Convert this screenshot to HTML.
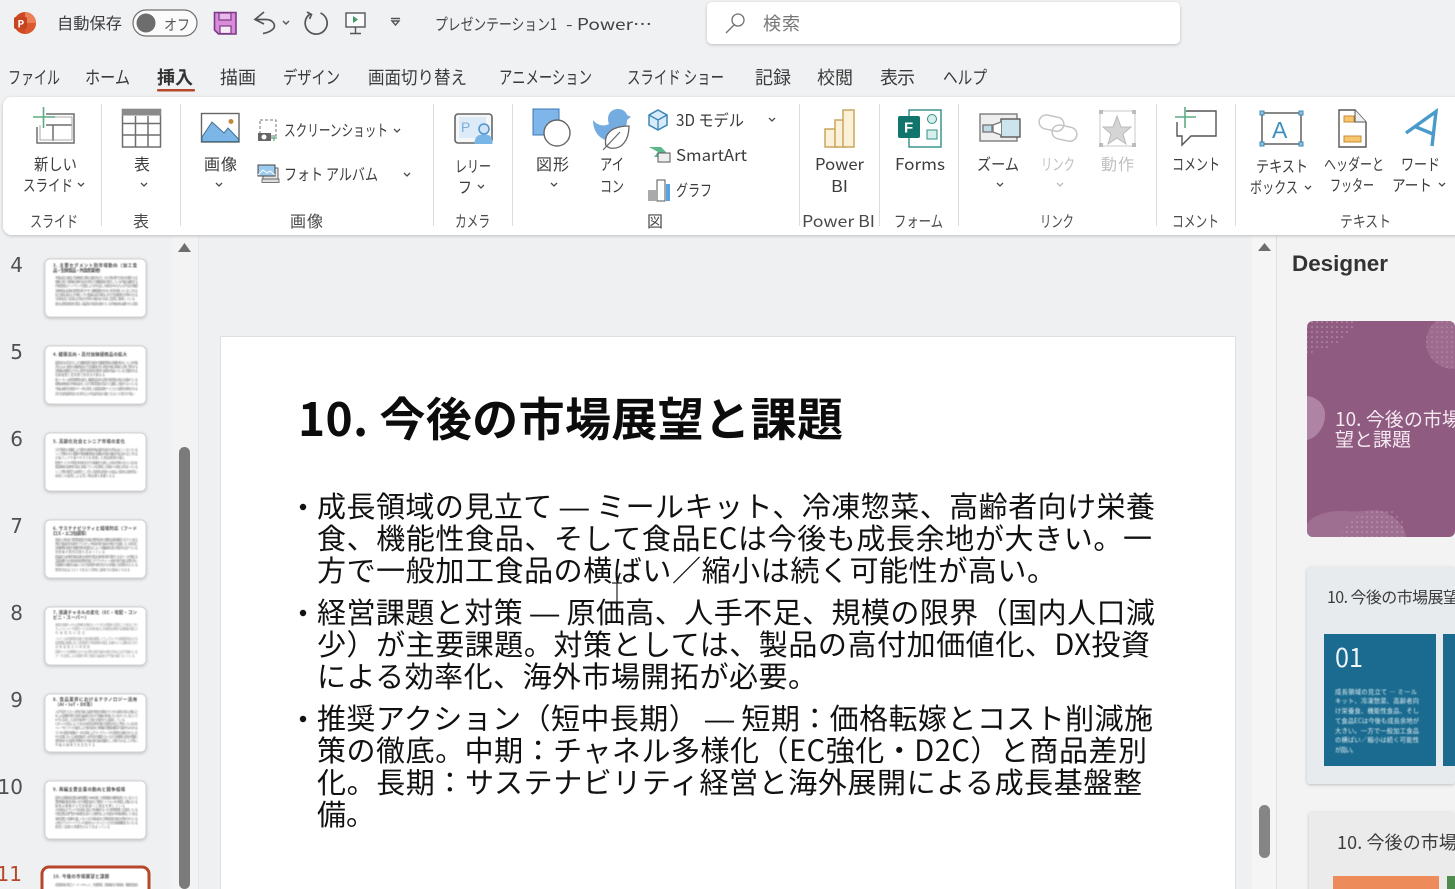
<!DOCTYPE html>
<html lang="ja"><head><meta charset="utf-8"><title>PowerPoint</title>
<style>
html,body{margin:0;padding:0;width:1455px;height:889px;overflow:hidden;background:#f0f1f3}
svg{display:block;position:absolute;left:0;top:0;filter:blur(.25px)}
text{font-family:"Noto Sans CJK JP","Liberation Sans",sans-serif;fill:#3c3c3c}
tspan.d{font-family:"Liberation Sans",sans-serif}
.t{font-size:16px}
.g{font-size:16px;fill:#4a4a4a}
.tab{font-size:18px;fill:#3a3a3a}
.b{font-size:29px;fill:#111}
.n{font-size:20px;fill:#505050;text-anchor:end;font-family:"DejaVu Sans",sans-serif}
.tt{font-size:4.4px;font-weight:700;fill:#444}
.tb{font-size:3.2px;fill:#777}
.s{font-size:6.300px;fill:#e4eff4}
</style></head><body>
<svg width="1455" height="889" viewBox="0 0 1455 889" xmlns="http://www.w3.org/2000/svg">
<defs>
<filter id="sh" x="-5%" y="-20%" width="110%" height="140%"><feDropShadow dx="0" dy="1" stdDeviation="1.500" flood-color="#000" flood-opacity=".22"/></filter>
<filter id="bl" x="-5%" y="-5%" width="110%" height="110%"><feGaussianBlur stdDeviation=".4"/></filter>
<pattern id="dots" width="5" height="5" patternUnits="userSpaceOnUse"><circle cx="2" cy="2" r=".8" fill="#d3b3c8"/></pattern>
<clipPath id="c1"><rect x="1307" y="321" width="148" height="216" rx="6"/></clipPath>
</defs>
<rect width="1455" height="889" fill="#f0f1f3"/>

<!-- title bar -->
<circle cx="25" cy="23" r="11" fill="#cf4a24"/>
<path d="M25 12a11 11 0 0 1 11 11H25z" fill="#ea7f58"/>
<path d="M25 34a11 11 0 0 0 11-11H25z" fill="#d9582f"/>
<rect x="14" y="17" width="13" height="12" rx="2" fill="#c8431f"/>
<text x="17.500" y="27.500" style="font-size:10px;font-weight:700;fill:#fff">P</text>
<text class="t" x="57" y="29" textLength="65" lengthAdjust="spacingAndGlyphs">自動保存</text>
<rect x="133" y="10" width="64" height="26" rx="13" fill="#fbfbfb" stroke="#6f6f6f" stroke-width="1.200"/>
<circle cx="146" cy="23" r="9.500" fill="#6d6d6d"/>
<text x="164" y="30" textLength="26" lengthAdjust="spacingAndGlyphs" style="font-size:15px;fill:#555">オフ</text>
<path d="M214.500 12.500H236V34H218.500L214.500 30z" fill="#d98ad9" stroke="#7c3a86" stroke-width="1.600"/>
<rect x="219" y="13" width="12" height="7" fill="#e9b9e9" stroke="#7c3a86" stroke-width="1.200"/>
<rect x="220" y="26" width="11" height="7.500" fill="#f7eaf7" stroke="#7c3a86" stroke-width="1.200"/>
<path d="M264 12L255 19.500L264 24M255 19.500H266C273 19.500 276 25 273.500 28.500C271.500 31 267 33 263 33.500" fill="none" stroke="#555" stroke-width="1.700"/>
<path d="M283 21l3 3 3-3M392 21h7l-3.500 4zM391 18.500h9" fill="none" stroke="#555" stroke-width="1.400"/>
<path d="M320.500 13A11 11 0 1 1 310 14M307 12l4.500 2.500-2 4.500" fill="none" stroke="#555" stroke-width="1.700"/>
<rect x="346" y="13" width="19" height="14" fill="#fbfbfb" stroke="#555" stroke-width="1.400"/>
<path d="M353 16l5 3.500-5 3.500z" fill="#3f9b6a"/>
<path d="M355.500 27v6M350 33.500h11" stroke="#555" stroke-width="1.400"/>
<text class="t" x="435" y="30" textLength="122" lengthAdjust="spacingAndGlyphs" style="fill:#444">プレゼンテーション1</text>
<text class="t" x="566" y="30" textLength="86" lengthAdjust="spacingAndGlyphs" style="fill:#444">-  Power…</text>
<rect x="707" y="2" width="473" height="42" rx="5" fill="#fff" filter="url(#sh)"/>
<circle cx="738" cy="20" r="6" fill="none" stroke="#707070" stroke-width="1.300"/>
<path d="M734 25l-8 8" stroke="#707070" stroke-width="1.300"/>
<text x="763" y="30" textLength="37" style="font-size:18px;fill:#777">検索</text>

<!-- tabs -->
<text class="tab" x="8" y="84" textLength="52" lengthAdjust="spacingAndGlyphs">ファイル</text>
<text class="tab" x="85" y="84" textLength="45" lengthAdjust="spacingAndGlyphs">ホーム</text>
<text class="tab" x="157" y="84" textLength="36" style="font-weight:700;fill:#333">挿入</text>
<rect x="157" y="89" width="38" height="2.500" rx="1" fill="#b7472a"/>
<text class="tab" x="220" y="84" textLength="36">描画</text>
<text class="tab" x="283" y="84" textLength="57" lengthAdjust="spacingAndGlyphs">デザイン</text>
<text class="tab" x="368" y="84" textLength="99" lengthAdjust="spacingAndGlyphs">画面切り替え</text>
<text class="tab" x="499" y="84" textLength="93" lengthAdjust="spacingAndGlyphs">アニメーション</text>
<text class="tab" x="627" y="84" textLength="97" lengthAdjust="spacingAndGlyphs">スライド ショー</text>
<text class="tab" x="755" y="84" textLength="36">記録</text>
<text class="tab" x="817" y="84" textLength="36">校閲</text>
<text class="tab" x="880" y="84" textLength="35">表示</text>
<text class="tab" x="943" y="84" textLength="44" lengthAdjust="spacingAndGlyphs">ヘルプ</text>

<!-- sidebars / canvas -->
<rect x="0" y="236" width="172" height="653" fill="#eff0f2"/>
<rect x="172" y="236" width="27" height="653" fill="#f3f3f4"/>
<rect x="199" y="236" width="1053" height="653" fill="#eef0f2"/>
<rect x="1252" y="236" width="25" height="653" fill="#f5f5f6"/>
<rect x="1277" y="236" width="178" height="653" fill="#f3f3f4"/>
<rect x="1276" y="236" width="1" height="653" fill="#dfdfdf"/>
<rect x="198" y="236" width="1" height="653" fill="#e6e6e6"/>
<path d="M178 252l6.500-9 6.500 9z" fill="#6e6e6e"/>
<rect x="179" y="447" width="11" height="442" rx="5.500" fill="#7b7b7b"/>
<path d="M1258 251l6.500-8 6.500 8z" fill="#6e6e6e"/>
<rect x="1259" y="805" width="11" height="53" rx="5.500" fill="#858585"/>

<!-- ribbon -->
<rect x="3" y="97" width="1470" height="138" rx="9" fill="#fff" filter="url(#sh)"/>
<g fill="#dcdcdc">
<rect x="101" y="104" width="1" height="122"/><rect x="180" y="104" width="1" height="122"/>
<rect x="433" y="104" width="1" height="122"/><rect x="512" y="104" width="1" height="122"/>
<rect x="799" y="104" width="1" height="122"/><rect x="879" y="104" width="1" height="122"/>
<rect x="958" y="104" width="1" height="122"/><rect x="1156" y="104" width="1" height="122"/>
<rect x="1235" y="104" width="1" height="122"/>
</g>

<!-- ribbon icons -->
<g fill="none" stroke="#6f6f6f" stroke-width="1.500">
<path d="M46 114H74V143H37V127"/><path d="M53 125V141M46 125H72"/>
<path d="M40 125V140H72V117H50" stroke="#aaa" stroke-width="1"/>
<rect x="122.500" y="109.500" width="38" height="37.500"/><path d="M122.500 123.500H160.500M122.500 135H160.500M135.500 116V147M148 116V147"/>
</g>
<path d="M43.500 107V128M33 117H55" stroke="#5cab82" stroke-width="1.600" fill="none"/>
<rect x="122" y="109" width="39" height="6.500" fill="#8a8a8a"/>
<rect x="201.500" y="113.500" width="37.500" height="28.500" fill="#fff" stroke="#666" stroke-width="1.400"/>
<path d="M202 141V137L212 122L224 133L228 128L238.500 139V141.500H202z" fill="#7cb6e6" stroke="#44708f"/>
<circle cx="231" cy="121.500" r="2.500" fill="#c4883a"/>
<rect x="260" y="120" width="16" height="16" fill="none" stroke="#777" stroke-dasharray="3 2"/>
<rect x="258" y="133" width="13" height="8" fill="#666"/><circle cx="264" cy="137" r="2.500" fill="#fff"/>
<path d="M274 135v6M271 138h6" stroke="#5cab82" stroke-width="1.200"/>
<path d="M262 179h17v3.500h-17z" fill="#ddd" stroke="#777"/><rect x="263" y="168" width="15" height="11" fill="#e5e5e5" stroke="#666"/>
<path d="M258 165h17v11h-17z" fill="#9ccbf0" stroke="#444"/><path d="M258 175l5-5 4 3 3-2 5 4" fill="none" stroke="#fff"/>
<rect x="455" y="114" width="37" height="29" rx="3" fill="#f6f6f6" stroke="#666" stroke-width="1.600"/>
<rect x="459" y="117" width="27" height="21" fill="#dcebf7"/>
<text x="461" y="132" style="font-size:14px;fill:#79b0dd;font-family:'Liberation Sans',sans-serif">P</text>
<circle cx="484" cy="129" r="5" fill="#cfe5f7" stroke="#4d93cc" stroke-width="1.500"/>
<path d="M474.500 144c0-8 4-9.500 9.500-9.500s8.500 1.500 8.500 9.500z" fill="#79b6e8"/>

<rect x="533" y="109" width="26" height="26" fill="#7fb6ea" stroke="#3a78b5"/>
<circle cx="557" cy="133" r="13" fill="#fff" stroke="#666" stroke-width="1.400"/>
<path d="M593 120C597 125 603 127 609 124C606 116 610 109 618 109C623 109 626 112 627 115L631 117L627 120C627 130 620 141 610 141C600 140 593 132 593 120z" fill="#74abe0"/>
<path d="M606 146C603 133 613 126 629 126C629 140 622 150 610 148z" fill="#fff" stroke="#666" stroke-width="1.300"/>
<path d="M603 150L620 132" stroke="#666" stroke-width="1.200"/>
<path d="M658 110l9 5v10l-9 5-9-5v-10z" fill="#d8ebfa" stroke="#3a85b8" stroke-width="1.500"/><path d="M649 115l9 5 9-5M658 120v10" fill="none" stroke="#3a85b8" stroke-width="1.300"/>
<path d="M649 147h12l5 5-5 5h-7l4-5z" fill="#5cb88b"/><rect x="658" y="153" width="12" height="9" fill="#eee" stroke="#555"/>
<rect x="648" y="190" width="8" height="11" fill="#aaa"/><rect x="657" y="180" width="8" height="21" fill="#fff" stroke="#555"/><rect x="666" y="184" width="4" height="17" fill="#57a2e0"/>

<g fill="#fbf1d8" stroke="#c9a55e" stroke-width="1.500">
<rect x="825" y="129" width="13" height="18"/><rect x="835" y="120" width="10" height="27"/><rect x="843" y="110" width="11" height="37"/>
</g>
<rect x="909" y="110" width="32" height="37" fill="#fff" stroke="#2f8f84" stroke-width="1.400"/>
<circle cx="932" cy="119" r="4.500" fill="#d6efec" stroke="#2f8f84"/><rect x="927" y="130" width="10" height="9" fill="#d6efec" stroke="#2f8f84"/>
<rect x="898" y="116" width="22" height="22" rx="2" fill="#11756d"/>
<text x="904" y="132.500" style="font-size:15px;font-weight:700;fill:#fff;font-family:'Liberation Sans',sans-serif">F</text>

<g fill="none" stroke="#7a7a7a" stroke-width="1.400">
<rect x="980" y="114" width="37" height="27" fill="#eee"/><rect x="1001" y="119" width="19" height="18" fill="#cde4ec" stroke="#5a5a5a"/><path d="M1001 122l-8 3v7l8 3" fill="#fff"/><rect x="983" y="125" width="9" height="7" fill="#bcdce8"/>
</g>
<g fill="none" stroke="#c4c4c4" stroke-width="1.500"><rect x="1039" y="116" width="25" height="14" rx="7" transform="rotate(12 1051 123)"/><rect x="1052" y="126" width="25" height="14" rx="7" transform="rotate(12 1064 133)"/></g>
<rect x="1100" y="111" width="35" height="35" fill="none" stroke="#c8c8c8"/>
<path d="M1117 116l4 11h10l-8 7 3 10-9-6-9 6 3-10-8-7h10z" fill="#d5d5d5" stroke="#bbb"/>
<g fill="#bcbcbc"><rect x="1099" y="110" width="4" height="4"/><rect x="1132" y="110" width="4" height="4"/><rect x="1099" y="143" width="4" height="4"/><rect x="1132" y="143" width="4" height="4"/></g>
<path d="M1186 111H1216V136H1191L1182 145V136H1177V122" fill="#fff" stroke="#555" stroke-width="1.400"/>
<path d="M1185 107V128M1175 117H1196" stroke="#5cab82" stroke-width="1.600"/>
<rect x="1262" y="113" width="39" height="31" fill="#fff" stroke="#555" stroke-width="1.400"/>
<g fill="#8cc3e4" stroke="#3e88b5"><rect x="1260" y="111" width="4" height="4"/><rect x="1299" y="111" width="4" height="4"/><rect x="1260" y="142" width="4" height="4"/><rect x="1299" y="142" width="4" height="4"/></g>
<text x="1272" y="138" style="font-size:23px;fill:#3f8fbf;font-family:'Liberation Sans',sans-serif">A</text>
<path d="M1339 110H1355L1366 122V147H1339z" fill="#fff" stroke="#555" stroke-width="1.400"/>
<path d="M1355 110V122H1366" fill="#eee" stroke="#555"/>
<rect x="1344" y="116" width="10" height="6" fill="#f7c56d" stroke="#c98c35"/><rect x="1344" y="136" width="17" height="6" fill="#f7c56d" stroke="#c98c35"/>
<path d="M1406 133L1436 111.500L1432 146M1416 127L1433 134" fill="none" stroke="#4a9bcb" stroke-width="3.400"/>

<!-- chevrons -->
<g fill="none" stroke="#4a4a4a" stroke-width="1.300">
<path d="M78 183l3 3 3-3M141 183l3 3 3-3M216 183l3 3 3-3M394 129l3 3 3-3M404 173l3 3 3-3M478 185l3 3 3-3M551 183l3 3 3-3M769 118l3 3 3-3M997 183l3 3 3-3M1305 186l3 3 3-3M1439 183l3 3 3-3"/>
<path d="M1057 183l3 3 3-3" stroke="#bbb"/>
</g>

<!-- ribbon labels -->
<text class="t" x="34" y="170" textLength="43" lengthAdjust="spacingAndGlyphs">新しい</text>
<text class="t" x="23" y="191" textLength="50" lengthAdjust="spacingAndGlyphs">スライド</text>
<text class="t" x="134" y="170" textLength="16">表</text>
<text class="t" x="204" y="170" textLength="33">画像</text>
<text class="t" x="284" y="136" textLength="104" lengthAdjust="spacingAndGlyphs">スクリーンショット</text>
<text class="t" x="284" y="180" textLength="94" lengthAdjust="spacingAndGlyphs">フォト アルバム</text>
<text class="t" x="455" y="172" textLength="36" lengthAdjust="spacingAndGlyphs">レリー</text>
<text class="t" x="458" y="193" textLength="14" lengthAdjust="spacingAndGlyphs">フ</text>
<text class="t" x="536" y="170" textLength="33">図形</text>
<text class="t" x="600" y="170" textLength="24" lengthAdjust="spacingAndGlyphs">アイ</text>
<text class="t" x="600" y="192" textLength="24" lengthAdjust="spacingAndGlyphs">コン</text>
<text class="t" x="676" y="126" textLength="68" lengthAdjust="spacingAndGlyphs">3D モデル</text>
<text class="t" x="676" y="161" textLength="71" lengthAdjust="spacingAndGlyphs">SmartArt</text>
<text class="t" x="676" y="196" textLength="36" lengthAdjust="spacingAndGlyphs">グラフ</text>
<text class="t" x="815" y="170" textLength="49" lengthAdjust="spacingAndGlyphs">Power</text>
<text class="t" x="831" y="192" textLength="17" lengthAdjust="spacingAndGlyphs">BI</text>
<text class="t" x="895" y="170" textLength="50" lengthAdjust="spacingAndGlyphs">Forms</text>
<text class="t" x="977" y="170" textLength="42" lengthAdjust="spacingAndGlyphs">ズーム</text>
<text class="t" x="1041" y="170" textLength="34" lengthAdjust="spacingAndGlyphs" style="fill:#c0c0c0">リンク</text>
<text class="t" x="1101" y="170" textLength="33" style="fill:#c0c0c0">動作</text>
<text class="t" x="1172" y="170" textLength="48" lengthAdjust="spacingAndGlyphs">コメント</text>
<text class="t" x="1256" y="172" textLength="52" lengthAdjust="spacingAndGlyphs">テキスト</text>
<text class="t" x="1250" y="193" textLength="48" lengthAdjust="spacingAndGlyphs">ボックス</text>
<text class="t" x="1324" y="170" textLength="60" lengthAdjust="spacingAndGlyphs">ヘッダーと</text>
<text class="t" x="1330" y="191" textLength="44" lengthAdjust="spacingAndGlyphs">フッター</text>
<text class="t" x="1401" y="170" textLength="39" lengthAdjust="spacingAndGlyphs">ワード</text>
<text class="t" x="1392" y="191" textLength="40" lengthAdjust="spacingAndGlyphs">アート</text>

<text class="g" x="30" y="227" textLength="48" lengthAdjust="spacingAndGlyphs">スライド</text>
<text class="g" x="133" y="227" textLength="16">表</text>
<text class="g" x="290" y="227" textLength="33">画像</text>
<text class="g" x="455" y="227" textLength="35" lengthAdjust="spacingAndGlyphs">カメラ</text>
<text class="g" x="647" y="227" textLength="16">図</text>
<text class="g" x="802" y="227" textLength="73" lengthAdjust="spacingAndGlyphs">Power BI</text>
<text class="g" x="894" y="227" textLength="49" lengthAdjust="spacingAndGlyphs">フォーム</text>
<text class="g" x="1040" y="227" textLength="34" lengthAdjust="spacingAndGlyphs">リンク</text>
<text class="g" x="1172" y="227" textLength="47" lengthAdjust="spacingAndGlyphs">コメント</text>
<text class="g" x="1340" y="227" textLength="51" lengthAdjust="spacingAndGlyphs">テキスト</text>

<!-- slide numbers -->
<text class="n" x="23" y="272">4</text><text class="n" x="23" y="359">5</text>
<text class="n" x="23" y="446">6</text><text class="n" x="23" y="533">7</text>
<text class="n" x="23" y="620">8</text><text class="n" x="23" y="707">9</text>
<text class="n" x="23" y="794">10</text>
<text class="n" x="22" y="881" style="fill:#b7472a">11</text>

<!-- thumbnails -->
<g fill="#fff" stroke="#d2d2d2" filter="url(#sh)">
<rect x="45" y="259" width="101" height="58" rx="5"/><rect x="45" y="346" width="101" height="58" rx="5"/>
<rect x="45" y="433" width="101" height="58" rx="5"/><rect x="45" y="520" width="101" height="58" rx="5"/>
<rect x="45" y="607" width="101" height="58" rx="5"/><rect x="45" y="694" width="101" height="58" rx="5"/>
<rect x="45" y="781" width="101" height="58" rx="5"/>
</g>
<rect x="42" y="867" width="107" height="40" rx="7" fill="#fff" stroke="#b7472a" stroke-width="3"/>
<g filter="url(#bl)">
<text class="tt" x="53" y="267" textLength="84">3. 主要セグメント別市場動向（加工食</text>
<text class="tt" x="53" y="272" textLength="50">品・生鮮食品・外食産業 他）</text>
<text class="tb" x="55" y="279" textLength="83">市場は加工食品と生鮮食品で異なる動きを示しており各分野で対応が必要となる</text>
<text class="tb" x="55" y="283" textLength="83">価格上昇と消費者の節約志向が重なり需要構造が変化している今後も継続する</text>
<text class="tb" x="55" y="287" textLength="83">外食産業はインバウンド回復により持ち直しの傾向がみられ人手不足が課題</text>
<text class="tb" x="55" y="292" textLength="83">生鮮食品は天候の影響を受けやすく価格変動が大きい状況が続いているとされる</text>
<text class="tb" x="55" y="296" textLength="83">加工食品は値上げが進む一方で数量は減少傾向にあり付加価値化が求められる</text>
<text class="tb" x="55" y="300" textLength="80">冷凍食品と総菜は共働き世帯の増加を背景に堅調に推移している</text>
<text class="tb" x="55" y="305" textLength="83">各社は商品構成を見直し収益性の改善を進めている市場全体は緩やかに成長</text>

<text class="tt" x="53" y="356" textLength="74">4. 健康志向・高付加価値商品の拡大</text>
<text class="tb" x="55" y="364" textLength="83">健康志向の高まりにより機能性表示食品や低糖質商品の需要が拡大している市場</text>
<text class="tb" x="55" y="368" textLength="83">高たんぱく食品や減塩商品など付加価値の高い商品が増え単価の上昇に寄与する</text>
<text class="tb" x="55" y="372" textLength="83">消費者は価格だけでなく品質や安全性を重視する傾向が強まっていると指摘される</text>
<text class="tb" x="55" y="376" textLength="50">高齢者層と若年層で訴求点が異なる</text>
<text class="tb" x="55" y="381" textLength="83">各メーカーは研究開発を強化し機能性素材の活用や新商品の投入を進めている</text>
<text class="tb" x="55" y="385" textLength="83">植物由来食品の市場も拡大しており環境意識の高まりと連動した動きとなっている</text>
<text class="tb" x="55" y="390" textLength="83">今後は個別化栄養やデータを活用した健康支援サービスとの連携も期待される</text>
<text class="tb" x="55" y="395" textLength="80">高付加価値商品の比率向上が収益改善の鍵となるとの見方が強い</text>

<text class="tt" x="53" y="443" textLength="72">5. 高齢化社会とシニア市場の変化</text>
<text class="tb" x="55" y="451" textLength="83">少子高齢化の進展により国内の食品市場は量的な拡大が見込みにくくなっている</text>
<text class="tb" x="55" y="455" textLength="83">シニア層向けの介護食や栄養補助食品の需要は今後も増加が見込まれるとされる</text>
<text class="tb" x="55" y="459" textLength="70">少量パックや食べやすさを重視した商品開発が進む</text>
<text class="tb" x="55" y="464" textLength="83">配食サービスや宅配の利用が広がり流通面でも新しい対応が求められているため</text>
<text class="tb" x="55" y="468" textLength="83">健康寿命の延伸を背景に栄養バランスを重視した商品への関心が高まっている</text>
<text class="tb" x="55" y="473" textLength="83">シニア層の購買力は依然として高く高品質な商品への支払い意欲も比較的高い</text>
<text class="tb" x="55" y="477" textLength="60">地域との連携による買い物支援も重要となる</text>

<text class="tt" x="53" y="530" textLength="84">6. サステナビリティと環境対応（フード</text>
<text class="tt" x="53" y="535" textLength="36">ロス・エコ包装等）</text>
<text class="tb" x="55" y="541" textLength="83">食品ロス削減と環境配慮型の包装が業界全体の重要な経営課題となりつつある</text>
<text class="tb" x="55" y="545" textLength="83">再生可能素材の採用やプラスチック削減の取り組みが各社で加速している状況だ</text>
<text class="tb" x="55" y="549" textLength="83">賞味期限の延長や需要予測の精度向上によって廃棄量を減らす動きも広がっている</text>
<text class="tb" x="55" y="553" textLength="50">消費者の環境意識も高まっている</text>
<text class="tb" x="55" y="558" textLength="83">調達面では持続可能な原料の使用や認証の取得が取引条件となるケースが増える</text>
<text class="tb" x="55" y="562" textLength="83">温室効果ガスの排出削減目標を設定しサプライチェーン全体で取り組む企業も多い</text>
<text class="tb" x="55" y="566" textLength="83">情報開示の要請も強まっており投資家や取引先からの評価にも影響を与えている</text>
<text class="tb" x="55" y="571" textLength="75">環境対応はコストであると同時に競争力の源泉ともなる</text>

<text class="tt" x="53" y="614" textLength="84">7. 流通チャネルの変化（EC・宅配・コン</text>
<text class="tt" x="53" y="619" textLength="36">ビニ・スーパー）</text>
<text class="tb" x="55" y="626" textLength="83" style="fill:#999">食品の流通チャネルは多様化が進みスーパー中心の構造から変化しつつあるとされ</text>
<text class="tb" x="55" y="630" textLength="83" style="fill:#999">ネットスーパーや宅配サービスの利用が拡大し利便性を重視する消費者が増えた</text>
<text class="tb" x="55" y="634" textLength="30" style="fill:#999">市場環境の変化</text>
<text class="tb" x="55" y="640" textLength="83" style="fill:#999">コンビニは中食商品の強化で来店客を確保しドラッグストアも食品販売を広げる</text>
<text class="tb" x="55" y="644" textLength="83" style="fill:#999">製造業者は販路に応じた商品設計と物流体制の見直しを進めていく必要が出てきた</text>
<text class="tb" x="55" y="648" textLength="35" style="fill:#999">消費者接点の再構築</text>
<text class="tb" x="55" y="653" textLength="83" style="fill:#999">直販サイトや定期購入モデルなど新たな取り組みも各社で徐々に広がり始めている</text>
<text class="tb" x="55" y="657" textLength="80" style="fill:#999">データ活用による需要予測と販促の最適化が今後の鍵となっている</text>

<text class="tt" x="53" y="701" textLength="84">8. 食品業界におけるテクノロジー活用</text>
<text class="tt" x="55" y="706" textLength="40">（AI・IoT・DX等）</text>
<text class="tb" x="55" y="713" textLength="83">人手不足やコスト上昇を背景に製造や物流の現場でデジタル技術の導入が進んだ</text>
<text class="tb" x="55" y="717" textLength="83">AIによる需要予測と在庫の最適化が広がり廃棄の削減にもつながっているという</text>
<text class="tb" x="55" y="721" textLength="70">IoTを活用した品質管理や工場の自動化も進展している</text>
<text class="tb" x="55" y="725" textLength="83">ロボットの導入によって省人化を図る事例が増え生産性の向上に寄与しているため</text>
<text class="tb" x="55" y="729" textLength="83">トレーサビリティの強化により食の安全と消費者の信頼を確保する動きもみられる</text>
<text class="tb" x="55" y="734" textLength="83">デジタル販促や顧客データの活用によりマーケティングの高度化も進められている</text>
<text class="tb" x="55" y="738" textLength="83">中小企業においては投資負担と人材不足が課題となっており支援策の活用が重要だ</text>
<text class="tb" x="55" y="742" textLength="83">業界全体での連携や標準化も今後の取り組み課題として挙げられることが多い</text>
<text class="tb" x="55" y="746" textLength="40">今後の競争力を左右する</text>

<text class="tt" x="53" y="791" textLength="72">9. 再編主要企業の動向と競争環境</text>
<text class="tb" x="55" y="799" textLength="83">国内の主要食品企業は海外展開とM&amp;Aを通じて成長機会の確保を図っているという</text>
<text class="tb" x="55" y="803" textLength="83">業界再編の動きが続いており規模の拡大と事業ポートフォリオの見直しが進んでいる</text>
<text class="tb" x="55" y="807" textLength="70">競争は価格から付加価値へと軸足を移している</text>
<text class="tb" x="55" y="811" textLength="83">大手各社はブランド力を背景に値上げを実施する一方で新規事業にも投資している</text>
<text class="tb" x="55" y="815" textLength="83">中堅企業は専門性や地域性を活かした差別化により独自の市場を開拓しつつある</text>
<text class="tb" x="55" y="820" textLength="83">海外企業との競争も激しくなっており輸出拡大と現地生産の強化が求められている</text>
<text class="tb" x="55" y="824" textLength="83">小売のプライベートブランドの拡大もメーカーにとって大きな競争要因となっている</text>
<text class="tb" x="55" y="828" textLength="55">提携と協業の重要性がより高まっている</text>

<text class="tt" x="53" y="878" textLength="56">10. 今後の市場展望と課題</text>
<text class="tb" x="55" y="886" textLength="83">成長領域の見立て — ミールキット、冷凍惣菜、高齢者向け栄養食、機能性食品</text>
</g>

<!-- slide -->
<rect x="220.500" y="336.500" width="1015" height="570" fill="#fff" stroke="#dedfe1"/>
<text x="298" y="436" textLength="545" style="font-size:46px;font-weight:700;fill:#0c0c0c">10. 今後の市場展望と課題</text>
<g fill="#111"><circle cx="303" cy="507" r="3.200"/><circle cx="303" cy="613" r="3.200"/><circle cx="303" cy="719" r="3.200"/></g>
<text class="b" x="317" y="517" textLength="838">成長領域の見立て <tspan class="d">—</tspan> ミールキット、冷凍惣菜、高齢者向け栄養</text>
<text class="b" x="317" y="549" textLength="835">食、機能性食品、そして食品ECは今後も成長余地が大きい。一</text>
<text class="b" x="317" y="581" textLength="739">方で一般加工食品の横ばい／縮小は続く可能性が高い。</text>
<text class="b" x="317" y="623" textLength="838">経営課題と対策 <tspan class="d">—</tspan> 原価高、人手不足、規模の限界（国内人口減</text>
<text class="b" x="317" y="655" textLength="833">少）が主要課題。対策としては、製品の高付加価値化、DX投資</text>
<text class="b" x="317" y="687" textLength="500">による効率化、海外市場開拓が必要。</text>
<text class="b" x="317" y="729" textLength="836">推奨アクション（短中長期） <tspan class="d">—</tspan> 短期：価格転嫁とコスト削減施</text>
<text class="b" x="317" y="761" textLength="830">策の徹底。中期：チャネル多様化（EC強化・D2C）と商品差別</text>
<text class="b" x="317" y="793" textLength="825">化。長期：サステナビリティ経営と海外展開による成長基盤整</text>
<text class="b" x="317" y="825" textLength="58">備。</text>
<path d="M612 583h10M617 583v20M613 603h8" stroke="#222" stroke-width="1.200" fill="none"/>

<!-- designer -->
<text x="1292" y="271" textLength="96" lengthAdjust="spacingAndGlyphs" style="font-size:22px;font-weight:700;fill:#333;font-family:'Liberation Sans',sans-serif">Designer</text>
<g clip-path="url(#c1)">
<rect x="1307" y="321" width="148" height="216" fill="#8f5b81"/>
<path d="M1307 321h50l-8 14-18 12-24 7z" fill="url(#dots)" opacity=".75"/>
<circle cx="1453" cy="342" r="27" fill="#9c6b8e"/><circle cx="1453" cy="342" r="27" fill="url(#dots)" opacity=".5"/>
<path d="M1307 396c10 1 17 8 18 17 1 13-8 25-18 27z" fill="#ae83a4"/>
<path d="M1307 537V524C1312 515 1330 510 1345 511C1360 513 1375 508 1385 512C1400 520 1406 530 1406 537z" fill="#9f6f92"/>
<path d="M1340 537C1345 520 1370 504 1392 510C1405 518 1406 530 1406 537z" fill="url(#dots)" opacity=".7"/>
<text x="1335" y="426" textLength="145" style="font-size:19px;fill:#f5e9f1">10. 今後の市場展</text>
<text x="1335" y="446" textLength="76" style="font-size:19px;fill:#f5e9f1">望と課題</text>
</g>
<rect x="1307" y="567" width="148" height="217" rx="3" fill="#e7ebee" filter="url(#sh)"/>
<text x="1327" y="603" textLength="132" style="font-size:16px;fill:#3c3c3c">10. 今後の市場展望</text>
<rect x="1324" y="634" width="112" height="132" fill="#1a6b8f"/>
<rect x="1443" y="634" width="12" height="132" fill="#1a6b8f"/>
<text x="1335" y="667" textLength="28" lengthAdjust="spacingAndGlyphs" style="font-size:26px;fill:#eef6fa">01</text>
<g filter="url(#bl)">
<text class="s" x="1335" y="694" textLength="82">成長領域の見立て — ミール</text>
<text class="s" x="1335" y="703" textLength="84">キット、冷凍惣菜、高齢者向</text>
<text class="s" x="1335" y="713" textLength="84">け栄養食、機能性食品、そし</text>
<text class="s" x="1335" y="723" textLength="84">て食品ECは今後も成長余地が</text>
<text class="s" x="1335" y="733" textLength="84">大きい。一方で一般加工食品</text>
<text class="s" x="1335" y="742" textLength="84">の横ばい／縮小は続く可能性</text>
<text class="s" x="1335" y="752" textLength="22">が高い。</text>
</g>
<rect x="1309" y="812" width="146" height="90" rx="3" fill="#ebebeb" filter="url(#sh)"/>
<text x="1337" y="849" textLength="138" style="font-size:18px;fill:#3c3c3c">10. 今後の市場展</text>
<rect x="1333" y="876" width="106" height="20" fill="#ed8b5a"/>
<rect x="1447" y="876" width="8" height="20" fill="#4f8a4f"/>
</svg>
</body></html>
